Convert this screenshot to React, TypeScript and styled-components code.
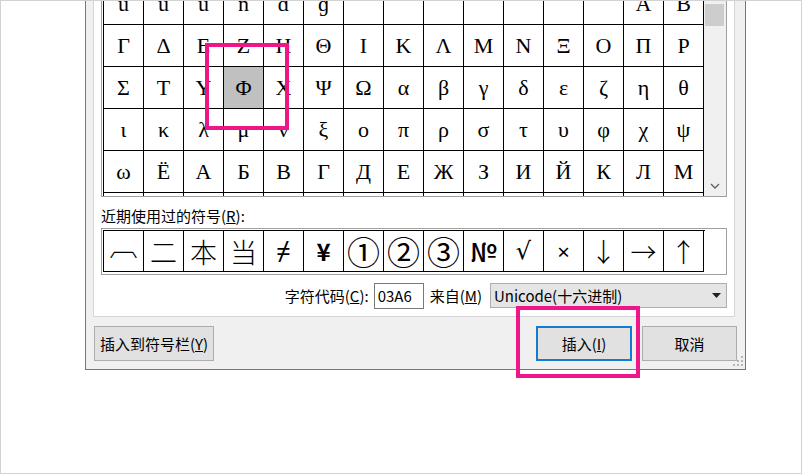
import React from 'react';
import styled, { createGlobalStyle } from 'styled-components';

const Global = createGlobalStyle`
  html, body { margin: 0; padding: 0; background: #fff; }
  body { font-family: "Noto Sans CJK SC", "Noto Sans", sans-serif; color: #000; }
`;

const CJK = '"Noto Sans CJK SC", "Noto Sans", sans-serif';

const Frame = styled.div`
  position: relative;
  width: 802px;
  height: 474px;
  box-sizing: border-box;
  border: 1px solid #d2d2d2;
  background: #fff;
  overflow: hidden;
  padding-left: 84px;
`;

const Dialog = styled.div`
  position: relative;
  width: 661px;
  box-sizing: border-box;
  border: 1px solid #767676;
  border-top: none;
  background: #f0f0f0;
  display: flex;
  flex-direction: column;
`;

const Panel = styled.div`
  margin-left: 7px;
  width: 642px;
  box-sizing: border-box;
  border: 1px solid #d5d5d5;
  border-top: none;
  background: #fff;
  padding: 0 7px 8px;
  display: flex;
  flex-direction: column;
`;

const SymbolBox = styled.div`
  height: 196px;
  box-sizing: border-box;
  border: 1px solid #a0a0a0;
  border-top: none;
  padding-left: 1px;
  display: flex;
`;

const Viewport = styled.div`
  width: 601px;
  height: 195px;
  overflow: hidden;
`;

const Grid = styled.div<{ $offset: number }>`
  display: grid;
  grid-template-columns: repeat(15, 40px);
  border-left: 1px solid #000;
  margin-top: ${p => p.$offset}px;
`;

const Cell = styled.div<{ $selected?: boolean }>`
  box-sizing: border-box;
  height: 42px;
  border-right: 1px solid #000;
  border-bottom: 1px solid #000;
  background: ${p => (p.$selected ? '#c0c0c0' : '#fff')};
  font-family: "Liberation Serif", "DejaVu Serif", serif;
  font-size: 22px;
  line-height: 41px;
  text-align: center;
  overflow: hidden;
`;

const Scrollbar = styled.div`
  width: 22px;
  height: 195px;
  box-sizing: border-box;
  background: #f0f0f0;
  padding-left: 1px;
  display: flex;
  flex-direction: column;
  justify-content: space-between;
`;

const Thumb = styled.div`
  margin-top: 3px;
  width: 19px;
  height: 22px;
  background: #cdcdcd;
`;

const Arrow = styled.svg`
  display: block;
  margin: 0 0 7px 5px;
`;

const Label = styled.div`
  margin: 9px 0 2px;
  height: 20px;
  font-size: 15px;
  line-height: 20px;
  white-space: nowrap;
`;

const RecentBox = styled.div`
  height: 47px;
  box-sizing: border-box;
  border: 1px solid #a0a0a0;
  padding: 1px 0 2px 1px;
`;

const RecentRow = styled.div`
  display: flex;
  width: 601px;
  border-left: 1px solid #000;
  border-top: 1px solid #000;
`;

const RecentCell = styled.div<{ $size: number; $font: string; $weight?: number; $shift?: number }>`
  box-sizing: border-box;
  width: 40px;
  height: 41px;
  border-right: 1px solid #000;
  border-bottom: 1px solid #000;
  display: flex;
  align-items: center;
  justify-content: center;
  font-family: ${p => p.$font};
  font-size: ${p => p.$size}px;
  font-weight: ${p => p.$weight ?? 400};
  line-height: 1;
  overflow: hidden;
  & > span {
    position: relative;
    top: ${p => p.$shift ?? 0}px;
  }
`;

const CodeRow = styled.div`
  margin-top: 8px;
  height: 25px;
  display: flex;
  align-items: center;
  justify-content: flex-end;
  font-size: 15px;
  white-space: nowrap;
`;

const Input = styled.div`
  margin-left: 5px;
  width: 50px;
  height: 26px;
  box-sizing: border-box;
  border: 1px solid #7a7a7a;
  background: #fff;
  padding-left: 3px;
  line-height: 24px;
  font-size: 15px;
`;

const FromLabel = styled.span`
  margin-left: 6px;
`;

const Select = styled.div`
  margin-left: 8px;
  width: 237px;
  height: 25px;
  box-sizing: border-box;
  border: 1px solid #adadad;
  background: #e5e5e5;
  display: flex;
  align-items: center;
  justify-content: space-between;
  padding: 0 5px 0 3px;
  font-size: 15px;
`;

const ButtonRow = styled.div`
  margin: 9px 8px 8px;
  height: 35px;
  display: flex;
  gap: 10px;
`;

const Button = styled.div<{ $width: number; $default?: boolean }>`
  width: ${p => p.$width}px;
  height: 35px;
  box-sizing: border-box;
  border: ${p => (p.$default ? '2px solid #1979ca' : '1px solid #adadad')};
  background: #e1e1e1;
  display: flex;
  align-items: center;
  justify-content: center;
  font-size: 15px;
  white-space: nowrap;
`;

const Spacer = styled.div`
  flex: 1;
`;

const Grip = styled.svg`
  position: absolute;
  right: 1px;
  bottom: 2px;
`;

const Highlight = styled.div<{ $x: number; $y: number; $w: number; $h: number }>`
  position: absolute;
  left: ${p => p.$x - 1}px;
  top: ${p => p.$y - 1}px;
  width: ${p => p.$w}px;
  height: ${p => p.$h}px;
  box-sizing: border-box;
  border: 4px solid #ef168a;
  pointer-events: none;
`;

const rows: string[][] = [
  ['ǘ', 'ǚ', 'ǜ', 'ǹ', 'ɑ', 'ɡ', '', '', '', '', '', '', '', 'Α', 'Β'],
  ['Γ', 'Δ', 'Ε', 'Ζ', 'Η', 'Θ', 'Ι', 'Κ', 'Λ', 'Μ', 'Ν', 'Ξ', 'Ο', 'Π', 'Ρ'],
  ['Σ', 'Τ', 'Υ', 'Φ', 'Χ', 'Ψ', 'Ω', 'α', 'β', 'γ', 'δ', 'ε', 'ζ', 'η', 'θ'],
  ['ι', 'κ', 'λ', 'μ', 'ν', 'ξ', 'ο', 'π', 'ρ', 'σ', 'τ', 'υ', 'φ', 'χ', 'ψ'],
  ['ω', 'Ё', 'А', 'Б', 'В', 'Г', 'Д', 'Е', 'Ж', 'З', 'И', 'Й', 'К', 'Л', 'М'],
  ['', '', '', '', '', '', '', '', '', '', '', '', '', '', ''],
];

type Recent = { ch: string; size: number; font: string; weight?: number; shift?: number };
const SANS = '"Noto Sans", "DejaVu Sans", sans-serif';
const recent: Recent[] = [
  { ch: '︹', size: 28, font: CJK, weight: 300, shift: -7 },
  { ch: '二', size: 27, font: CJK, weight: 300 },
  { ch: '本', size: 27, font: CJK, weight: 300 },
  { ch: '当', size: 27, font: CJK, weight: 300 },
  { ch: '≠', size: 26, font: SANS },
  { ch: '¥', size: 24, font: CJK, weight: 600 },
  { ch: '①', size: 33, font: CJK },
  { ch: '②', size: 33, font: CJK },
  { ch: '③', size: 33, font: CJK },
  { ch: '№', size: 26, font: CJK, weight: 500 },
  { ch: '√', size: 24, font: '"DejaVu Serif", serif', weight: 300 },
  { ch: '×', size: 22, font: SANS },
  { ch: '↓', size: 26, font: CJK, weight: 300 },
  { ch: '→', size: 26, font: CJK, weight: 300 },
  { ch: '↑', size: 26, font: CJK, weight: 300 },
];

export default function App() {
  return (
    <>
      <Global />
      <Frame>
        <Dialog>
          <Panel>
            <SymbolBox>
              <Viewport>
                <Grid $offset={-18}>
                  {rows.map((r, ri) =>
                    r.map((c, ci) => (
                      <Cell key={`${ri}-${ci}`} $selected={ri === 2 && ci === 3}>
                        {c}
                      </Cell>
                    ))
                  )}
                </Grid>
              </Viewport>
              <Scrollbar>
                <Thumb />
                <Arrow width="10" height="6" viewBox="0 0 10 6">
                  <polyline points="1,1 5,5 9,1" fill="none" stroke="#606060" strokeWidth="1.3" />
                </Arrow>
              </Scrollbar>
            </SymbolBox>
            <Label>
              近期使用过的符号(<u>R</u>):
            </Label>
            <RecentBox>
              <RecentRow>
                {recent.map((r, i) => (
                  <RecentCell key={i} $size={r.size} $font={r.font} $weight={r.weight} $shift={r.shift}>
                    <span>{r.ch}</span>
                  </RecentCell>
                ))}
              </RecentRow>
            </RecentBox>
            <CodeRow>
              <span>
                字符代码(<u>C</u>):
              </span>
              <Input>03A6</Input>
              <FromLabel>
                来自(<u>M</u>)
              </FromLabel>
              <Select>
                <span>Unicode(十六进制)</span>
                <svg width="9" height="5" viewBox="0 0 9 5">
                  <polygon points="0,0 9,0 4.5,5" fill="#222" />
                </svg>
              </Select>
            </CodeRow>
          </Panel>
          <ButtonRow>
            <Button $width={120}>
              插入到符号栏(<u>Y</u>)
            </Button>
            <Spacer />
            <Button $width={96} $default>
              插入(<u>I</u>)
            </Button>
            <Button $width={95}>取消</Button>
          </ButtonRow>
          <Grip width="11" height="11" viewBox="0 0 11 11">
            <rect x="8" y="0" width="2" height="2" fill="#b5b5b5" />
            <rect x="4" y="4" width="2" height="2" fill="#b5b5b5" />
            <rect x="8" y="4" width="2" height="2" fill="#b5b5b5" />
            <rect x="0" y="8" width="2" height="2" fill="#b5b5b5" />
            <rect x="4" y="8" width="2" height="2" fill="#b5b5b5" />
            <rect x="8" y="8" width="2" height="2" fill="#b5b5b5" />
          </Grip>
        </Dialog>
        <Highlight $x={205} $y={43} $w={84} $h={87} />
        <Highlight $x={516} $y={306} $w={124} $h={72} />
      </Frame>
    </>
  );
}
